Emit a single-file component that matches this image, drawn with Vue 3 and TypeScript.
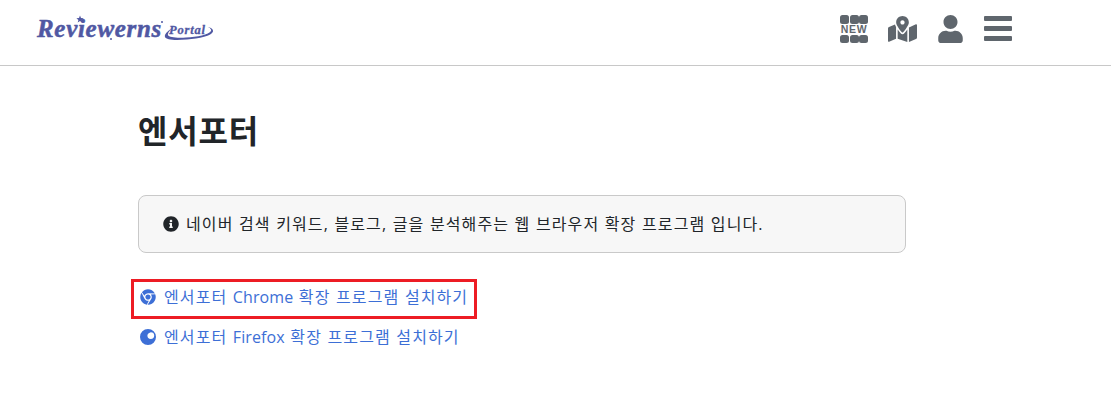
<script setup lang="ts">
interface InstallLink {
  browser: string;
  before: string;
  name: string;
  after: string;
  marked: boolean;
}

const links: InstallLink[] = [
  { browser: 'chrome', before: '엔서포터 ', name: 'Chrome', after: ' 확장 프로그램 설치하기', marked: true },
  { browser: 'firefox', before: '엔서포터 ', name: 'Firefox', after: ' 확장 프로그램 설치하기', marked: false }
];
</script>

<template>
  <div class="page">
    <header class="topbar">
      <a class="logo" href="#">
        <span class="logo-main">Reviewerns</span>
        <span class="logo-sub">Portal</span>
        <svg class="logo-marks" viewBox="0 0 180 28" fill="#5058a3">
          <path d="M43 0.5l1 2.6 2.6 0.1-2 1.7 0.7 2.6-2.3-1.5-2.3 1.5 0.7-2.6-2-1.7 2.6-0.1z" />
          <circle cx="74" cy="24" r="1" />
          <circle cx="125" cy="7" r="1" />
          <path d="M135 13c-4 3-8 6-7 9 1 3 10 3.500 22 2.500 12-1 25-3.500 26-8 0.500-2-2-4-5-4.500 3 1.500 3.500 3 3 4-2 3.500-14 6-25 6.500-9 0.500-17 0-18-2.500-0.500-2 2-4.500 4-7z" />
        </svg>
      </a>
      <nav class="tools">
        <div class="new-icon">
          <div class="cells"><i></i><i></i><i></i></div>
          <div class="new-text">NEW</div>
          <div class="cells"><i></i><i></i><i></i></div>
        </div>
        <svg class="map-icon" viewBox="0 0 576 512" fill="currentColor">
          <path d="M288 0c-69.59 0-126 56.41-126 126 0 56.26 82.35 158.8 113.9 196.02 6.39 7.54 17.82 7.54 24.2 0C331.65 284.8 414 182.26 414 126 414 56.41 357.59 0 288 0zm0 168c-23.2 0-42-18.8-42-42s18.8-42 42-42 42 18.8 42 42-18.8 42-42 42zM20.12 215.95A32.006 32.006 0 0 0 0 245.66v250.32c0 11.32 11.43 19.06 21.94 14.86L160 448V214.92c-8.84-15.98-16.07-31.54-21.25-46.42L20.12 215.95zM288 359.67c-14.07 0-27.38-6.18-36.51-16.96-19.66-23.2-40.57-49.62-59.49-76.72V448l192 64V266c-18.92 27.09-39.82 53.52-59.49 76.72-9.13 10.77-22.44 16.95-36.51 16.95zm266.06-198.51L416 224v288l139.88-55.95A31.996 31.996 0 0 0 576 426.34V176.02c0-11.32-11.43-19.06-21.94-14.86z" />
        </svg>
        <svg class="user-icon" viewBox="0 0 448 512" fill="currentColor">
          <path d="M224 256c70.7 0 128-57.3 128-128S294.7 0 224 0 96 57.3 96 128s57.3 128 128 128zm89.6 32h-16.7c-22.2 10.2-46.9 16-72.9 16s-50.6-5.8-72.9-16h-16.7C60.2 288 0 348.2 0 422.4V464c0 26.5 21.5 48 48 48h352c26.5 0 48-21.5 48-48v-41.6c0-74.2-60.2-134.4-134.4-134.4z" />
        </svg>
        <div class="bars"><i></i><i></i><i></i></div>
      </nav>
    </header>

    <main class="content">
      <h1>엔서포터</h1>

      <div class="notice">
        <svg class="info-icon" viewBox="0 0 512 512" fill="currentColor">
          <path d="M256 8C119 8 8 119.043 8 256c0 136.997 111 248 248 248s248-111.003 248-248C504 119.043 393 8 256 8zm0 110c23.196 0 42 18.804 42 42s-18.804 42-42 42-42-18.804-42-42 18.804-42 42-42zm56 254c0 6.627-5.373 12-12 12h-88c-6.627 0-12-5.373-12-12v-24c0-6.627 5.373-12 12-12h12v-64h-12c-6.627 0-12-5.373-12-12v-24c0-6.627 5.373-12 12-12h64c6.627 0 12 5.373 12 12v100h12c6.627 0 12 5.373 12 12v24z" />
        </svg>
        <span class="wide">네이버 검색 키워드, 블로그, 글을 분석해주는 웹 브라우저 확장 프로그램 입니다.</span>
      </div>

      <ul class="install-list">
        <li v-for="link in links" :key="link.browser" :class="{ marked: link.marked }">
          <a href="#">
            <svg v-if="link.browser === 'chrome'" class="browser-icon" viewBox="0 0 496 512" fill="currentColor">
              <path d="M131.5 217.5L55.1 100.1c47.6-59.2 119-91.8 192-92.1 42.3-.3 85.5 10.5 124.8 33.2 43.4 25.2 76.4 61.4 97.4 103L264 133.4c-58.1-3.4-113.4 29.3-132.5 84.1zm32.9 38.5c0 46.2 37.4 83.6 83.6 83.6s83.6-37.4 83.6-83.6-37.4-83.6-83.6-83.6-83.6 37.5-83.6 83.6zm314.9-89.2L339.6 174c37.9 44.3 38.5 108.2 6.6 157.2L234.1 503.6c46.5 2.5 94.4-7.7 137.8-32.9 107.4-62 150.9-192 107.4-303.9zM133.7 303.6L40.4 120.1C14.9 159.1 0 205.9 0 256c0 124 90.8 226.7 209.5 244.9l63.7-124.8c-57.6 10.8-113.2-20.8-139.5-72.5z" />
            </svg>
            <svg v-else class="browser-icon" viewBox="0 0 16 16" fill="currentColor">
              <path fill-rule="evenodd" d="M8 0a8 8 0 1 1 0 16A8 8 0 0 1 8 0zM10.800 3.200a3.400 3.400 0 1 1 0 6.800 3.400 3.400 0 0 1-3.400-3.400c0-1.400.8-2.700 3.400-3.400z" />
            </svg>
            <span class="wide">{{ link.before }}<span class="latin">{{ link.name }}</span>{{ link.after }}</span>
          </a>
        </li>
      </ul>
    </main>
  </div>
</template>

<style scoped>
.page {
  width: 1111px;
  height: 404px;
  overflow: hidden;
  background: #fff;
  color: #212529;
  font-family: "Open Sans", "Noto Sans CJK KR", sans-serif;
  font-size: 16px;
}

.topbar {
  height: 66px;
  box-sizing: border-box;
  border-bottom: 1px solid #c8c8c8;
  display: flex;
  align-items: flex-start;
  justify-content: space-between;
  padding: 15px 99px 0 37px;
}

.logo {
  position: relative;
  display: flex;
  align-items: center;
  width: 180px;
  height: 28px;
  color: #5058a3;
  text-decoration: none;
  font-family: "Liberation Serif", serif;
  font-style: italic;
  font-weight: 700;
}

.logo-main {
  width: 132px;
  font-size: 25px;
  letter-spacing: 0.7px;
  -webkit-text-stroke: 0.5px #5058a3;
}

.logo-sub {
  font-size: 12.5px;
  letter-spacing: 0.8px;
  margin-top: 2px;
  -webkit-text-stroke: 0.3px #5058a3;
}

.logo-marks {
  position: absolute;
  left: 0;
  top: 0;
  width: 180px;
  height: 28px;
}

.tools {
  display: flex;
  align-items: flex-start;
  color: #5f666d;
}

.new-icon {
  width: 28px;
  height: 28px;
  margin-right: 20px;
  display: flex;
  flex-direction: column;
  justify-content: space-between;
}

.cells {
  display: flex;
  justify-content: space-between;
}

.cells i {
  width: 9px;
  height: 8.5px;
  border-radius: 2.5px;
  background: currentColor;
}

.new-text {
  font-family: "Liberation Sans", sans-serif;
  font-size: 10.5px;
  line-height: 11px;
  font-weight: 700;
  letter-spacing: 0.7px;
  text-align: center;
  white-space: nowrap;
}

.map-icon {
  width: 29px;
  height: 26px;
  margin-top: 1px;
  margin-right: 21px;
}

.user-icon {
  width: 25px;
  height: 28px;
  margin-right: 21px;
}

.bars {
  width: 28px;
  height: 25px;
  margin-top: 1px;
  display: flex;
  flex-direction: column;
  justify-content: space-between;
}

.bars i {
  height: 5px;
  border-radius: 1px;
  background: currentColor;
}

.content {
  width: 768px;
  margin-left: 138px;
  padding-top: 43px;
}

h1 {
  margin: 0 0 42px;
  font-size: 32px;
  line-height: 44px;
  font-weight: 700;
  letter-spacing: 0.8px;
  color: #212529;
}

.notice {
  height: 58px;
  box-sizing: border-box;
  padding: 0 24px;
  display: flex;
  align-items: center;
  gap: 7px;
  background: #f7f7f7;
  border: 1px solid #c9c9c9;
  border-radius: 8px;
}

.wide {
  margin-bottom: 2px;
  letter-spacing: 1.1px;
  word-spacing: 0.3px;
}

.latin {
  letter-spacing: 0.1px;
}

.info-icon {
  width: 16px;
  height: 16px;
  flex: none;
}

.install-list {
  list-style: none;
  margin: 24px 0 0;
  padding: 0;
}

.install-list li {
  position: relative;
  height: 40px;
  display: flex;
  align-items: center;
}

.install-list li.marked::after {
  content: "";
  position: absolute;
  left: -7px;
  top: 2px;
  width: 346px;
  height: 40px;
  box-sizing: border-box;
  border: 3px solid #ed1c24;
}

.install-list a {
  display: flex;
  align-items: center;
  gap: 8px;
  padding-left: 2px;
  color: #3d6fd6;
  text-decoration: none;
}

.browser-icon {
  width: 16px;
  height: 16px;
  flex: none;
}
</style>
